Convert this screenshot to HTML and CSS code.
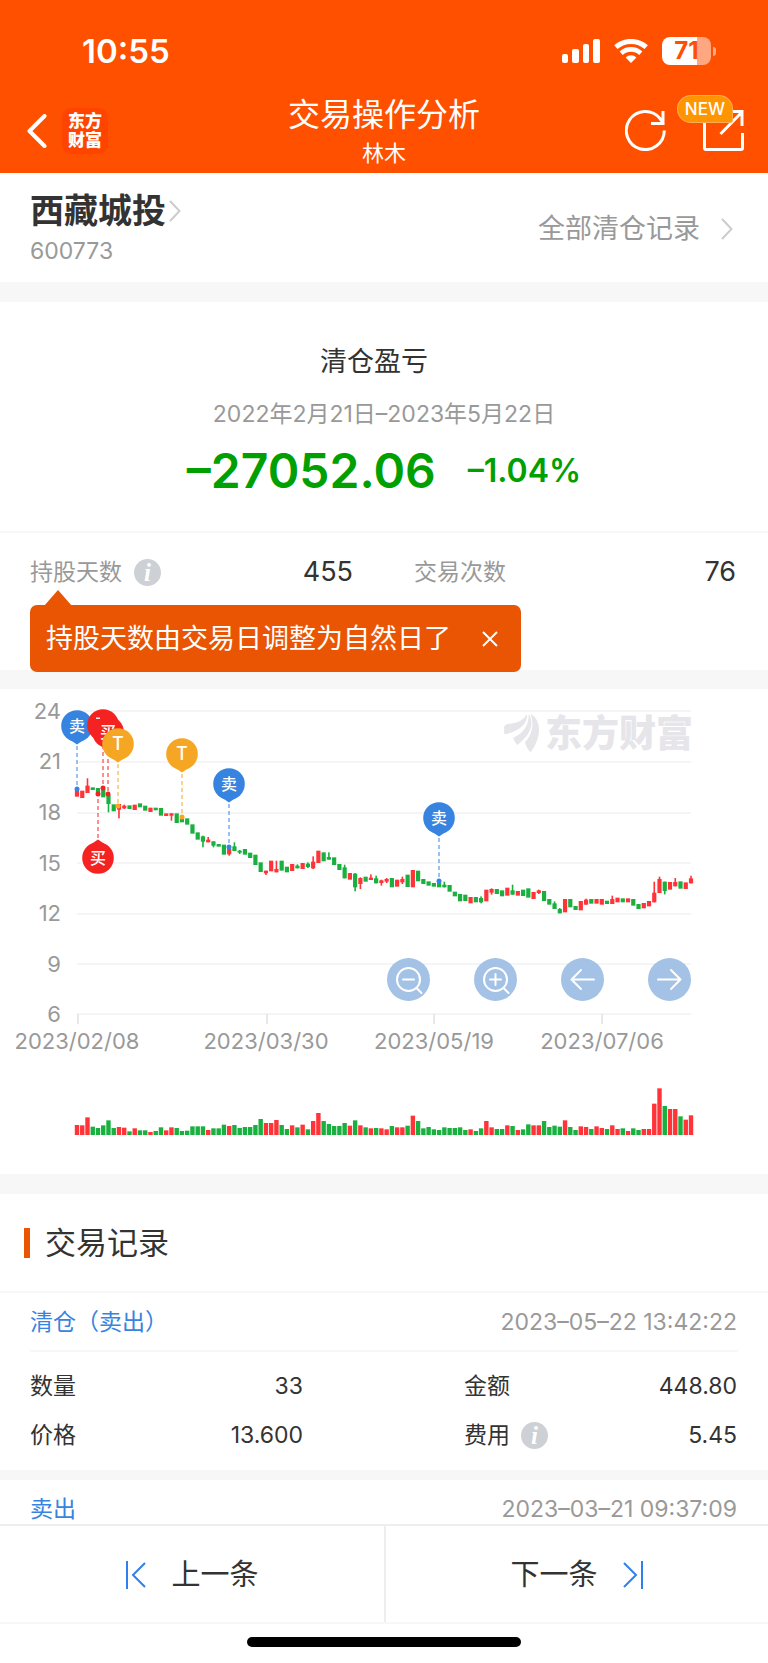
FILE: index.html
```html
<!DOCTYPE html>
<html lang="zh-CN">
<head>
<meta charset="utf-8">
<meta name="viewport" content="width=device-width, initial-scale=1">
<title>交易操作分析</title>
<link rel="stylesheet" href="styles.css">
</head>
<body>
<div class="app">
  <header class="header">
    <div class="status">
      <span class="status-time">10:55</span>
      <div class="status-icons">
        <svg class="signal" viewBox="0 0 38 24" aria-hidden="true"><rect x="0" y="15" width="6" height="9" rx="2"/><rect x="10" y="10" width="7" height="14" rx="2"/><rect x="21" y="5" width="6" height="19" rx="2"/><rect x="31" y="0" width="7" height="24" rx="2"/></svg>
        <svg class="wifi" viewBox="0 0 34 24" aria-hidden="true"><path d="M1.800 8.200a22.800 22.800 0 0 1 30.400 0" stroke-width="5"/><path d="M7.200 14.200a14.600 14.600 0 0 1 19.600 0" stroke-width="4.600"/><path class="wifi-dot" d="M17 24l-5.400-5.600a8 8 0 0 1 10.800 0z"/></svg>
        <div class="battery"><span class="battery-body">71</span><span class="battery-cap"></span></div>
      </div>
    </div>
    <div class="nav">
      <div class="nav-side">
        <button class="icon-btn" aria-label="返回"><svg class="back" viewBox="0 0 20 34"><path d="M17.500 2L2.500 17l15 15"/></svg></button>
        <div class="logo"><span>东方</span><span>财富</span></div>
      </div>
      <div class="nav-title"><h1>交易操作分析</h1><p>林木</p></div>
      <div class="nav-side nav-actions">
        <button class="icon-btn" aria-label="刷新"><svg class="act" viewBox="0 0 41 41"><path d="M39.300 20.500a19 19 0 1 1-4.300-12l3 4"/><path d="M38 1v12.500H26"/></svg></button>
        <button class="icon-btn share" aria-label="分享"><svg class="act" viewBox="0 0 41 41"><path d="M1.500 10v28q0 1.500 1.500 1.500h35q1.500 0 1.500-1.500V23"/><path d="M26 1.500h13V16M39 2L17.500 24"/></svg><span class="badge">NEW</span></button>
      </div>
    </div>
  </header>

  <main class="content">
    <section class="stock">
      <div>
        <a class="stock-name" href="#">西藏城投<svg class="chev" viewBox="0 0 12 22"><path d="M1 1l9.500 10L1 21"/></svg></a>
        <p class="stock-code">600773</p>
      </div>
      <a class="all-records" href="#">全部清仓记录<svg class="chev" viewBox="0 0 12 22"><path d="M1 1l9.500 10L1 21"/></svg></a>
    </section>

    <section class="profit">
      <div class="profit-main">
        <h2>清仓盈亏</h2>
        <p class="profit-date">2022年2月21日–2023年5月22日</p>
        <p class="profit-value"><strong>–27052.06</strong><span>–1.04%</span></p>
      </div>
      <dl class="stats">
        <div class="stat"><dt>持股天数<button class="info" aria-label="持股天数说明">i</button></dt><dd>455</dd></div>
        <div class="stat"><dt>交易次数</dt><dd>76</dd></div>
      </dl>
      <div class="tip" role="status"><span>持股天数由交易日调整为自然日了</span><button class="icon-btn" aria-label="关闭"><svg class="close" viewBox="0 0 16 16"><path d="M1 1l14 14M15 1L1 15"/></svg></button></div>
    </section>

    <section class="chart">
      <svg class="plot" viewBox="0 0 768 485" role="img" aria-label="股价走势与买卖点">
        <g class="grid">
          <path d="M77 22H691M77 73H691M77 124H691M77 174H691M77 225H691M77 275H691M77 325H691"/>
          <path class="ticks" d="M78 325v10M267 325v10M434 325v10M602 325v10"/>
        </g>
        <g class="watermark">
          <g transform="translate(500 0) scale(.3333)">
            <path d="M12 115Q14 104 30 104C55 103 70 92 81 76C84 105 55 128 13 136Z"/>
            <path d="M40 146C72 132 87 108 86 75C106 108 88 140 52 168Q43 158 40 146Z"/>
            <path d="M75 160C97 135 103 108 92 75C125 92 126 145 92 190Q79 178 75 160Z"/>
          </g>
          <text x="545" y="58">东方财富</text>
        </g>
        <g class="labels labels-y">
          <text x="61" y="30">24</text><text x="61" y="80">21</text><text x="61" y="131">18</text><text x="61" y="182">15</text><text x="61" y="232">12</text><text x="61" y="283">9</text><text x="61" y="333">6</text>
        </g>
        <g class="labels labels-x">
          <text x="77" y="360">2023/02/08</text><text x="266" y="360">2023/03/30</text><text x="434" y="360">2023/05/19</text><text x="602" y="360">2023/07/06</text>
        </g>
        <g id="candles"></g>
        <g id="volumes"></g>
        <g id="pins"></g>
      </svg>
      <div class="tools">
        <button class="tool" aria-label="缩小"><svg viewBox="0 0 43 43"><circle cx="21.500" cy="21.500" r="11.500"/><path d="M16 21.500h11M29.500 30l5 5"/></svg></button>
        <button class="tool" aria-label="放大"><svg viewBox="0 0 43 43"><circle cx="21.500" cy="21.500" r="11.500"/><path d="M16 21.500h11M21.500 16v11M29.500 30l5 5"/></svg></button>
        <button class="tool" aria-label="左移"><svg viewBox="0 0 43 43"><path d="M33 21.500H10.500M20 12l-9.500 9.500L20 31"/></svg></button>
        <button class="tool" aria-label="右移"><svg viewBox="0 0 43 43"><path d="M10 21.500h22.500M23 12l9.500 9.500L23 31"/></svg></button>
      </div>
    </section>

    <section class="records">
      <h2 class="records-title">交易记录</h2>
      <article class="record">
        <div class="record-head"><h3>清仓（卖出）</h3><time>2023–05–22 13:42:22</time></div>
        <dl class="record-grid">
          <div><dt>数量</dt><dd>33</dd></div>
          <div><dt>金额</dt><dd>448.80</dd></div>
          <div><dt>价格</dt><dd>13.600</dd></div>
          <div><dt>费用<button class="info" aria-label="费用说明">i</button></dt><dd>5.45</dd></div>
        </dl>
      </article>
      <article class="record">
        <div class="record-head"><h3>卖出</h3><time>2023–03–21 09:37:09</time></div>
      </article>
    </section>
  </main>

  <footer class="footer">
    <div class="pager">
      <button><svg viewBox="0 0 22 28"><path d="M2 0v28M20 2L8 14l12 12"/></svg>上一条</button>
      <button>下一条<svg viewBox="0 0 22 28"><path d="M20 0v28M2 2l12 12L2 26"/></svg></button>
    </div>
    <div class="home"><span></span></div>
  </footer>
</div>
<script src="chart.js"></script>
</body>
</html>
```
FILE: styles.css
```css
* { box-sizing: border-box; }
body, h1, h2, h3, p, dl, dd { margin: 0; font-weight: 400; }
body {
  background: #fff;
  color: #333;
  font-family: Inter, "Noto Sans CJK SC", sans-serif;
  font-size: 23px;
  line-height: 32px;
}
a { color: inherit; text-decoration: none; }
button { font: inherit; color: inherit; background: none; border: 0; padding: 0; }
svg { display: block; flex: none; }
path, circle { fill: none; }

.app { display: flex; flex-direction: column; height: 100vh; }

.header { flex: none; background: #ff5000; color: #fff; height: 173px; }
.status { display: flex; justify-content: space-between; align-items: center; height: 84px; padding: 18px 52px 0 82px; }
.status-time { font-size: 33px; font-weight: 600; line-height: 40px; }
.status-icons { display: flex; align-items: center; gap: 14px; }
.signal { width: 38px; height: 24px; fill: #fff; }
.wifi { width: 34px; height: 24px; stroke: #fff; }
.wifi .wifi-dot { fill: #fff; stroke: none; }
.battery { display: flex; align-items: center; gap: 2px; }
.battery-body { width: 49px; height: 28px; border-radius: 8px; background: linear-gradient(90deg, #fff 71%, #ffa780 71%); color: #ff5000; font-size: 24px; font-weight: 700; line-height: 28px; text-align: center; }
.battery-cap { width: 3px; height: 9px; border-radius: 0 4px 4px 0; background: #ffa780; }

.nav { display: grid; grid-template-columns: 1fr auto 1fr; align-items: center; height: 89px; padding: 4px 24px 0 27px; }
.nav-side { display: flex; align-items: center; gap: 15px; }
.nav-actions { justify-content: flex-end; gap: 37px; }
.icon-btn { display: block; position: relative; }
.back { width: 20px; height: 34px; stroke: #fff; stroke-width: 4; }
.back path { stroke-linecap: round; stroke-linejoin: round; }
.logo { display: grid; align-content: center; justify-items: center; width: 46px; height: 46px; border-radius: 9px; background: #ff4400; font-size: 17px; line-height: 19px; font-weight: 900; }
.nav-title { padding-right: 3px; text-align: center; }
.nav-title h1 { font-size: 32px; line-height: 44px; }
.nav-title p { font-size: 22px; line-height: 32px; }
.act { width: 41px; height: 41px; stroke: #fff; stroke-width: 3; }
.badge { position: absolute; right: 12px; top: -14px; height: 26px; padding: 0 7px; border-radius: 13px 13px 2px 13px; background: #ff9500; box-shadow: 0 0 0 1px #ffab50; font-size: 17px; font-weight: 500; line-height: 26px; }

.content { flex: 1; min-height: 0; overflow: hidden; }
.stock { display: flex; justify-content: space-between; align-items: center; height: 109px; padding: 2px 35px 0 30px; }
.stock-name { display: flex; align-items: center; gap: 3px; font-size: 34px; font-weight: 700; line-height: 44px; }
.stock-code { font-size: 23px; line-height: 36px; color: #999; }
.all-records { display: flex; align-items: center; gap: 21px; font-size: 27px; color: #999; }
.chev { width: 12px; height: 22px; stroke: #ccc; stroke-width: 2; }

.profit { position: relative; border-top: 20px solid #f7f7f7; border-bottom: 19px solid #f7f7f7; }
.profit-main { padding: 40px 0 31px; text-align: center; border-bottom: 2px solid #f7f7f7; }
.profit-main h2 { padding-right: 20px; font-size: 27px; line-height: 40px; }
.profit-date { margin-top: 16px; color: #999; }
.profit-value { display: flex; justify-content: center; align-items: center; gap: 32px; margin-top: 12px; color: #00a000; font-size: 32px; line-height: 58px; }
.profit-value span { font-weight: 600; }
.profit-value strong { font-size: 48px; font-weight: 600; }
.stats { display: grid; grid-template-columns: 353px 1fr; height: 137px; padding: 23px 32px 0 30px; }
.stat { display: flex; justify-content: space-between; height: 32px; padding-right: 30px; }
.stat + .stat { padding: 0 0 0 31px; }
.stat dt { display: flex; align-items: center; gap: 12px; color: #999; }
.stat dd { font-size: 27px; }
.info { width: 27px; height: 27px; border-radius: 50%; background: #cdd0d5; color: #fff; font-family: "Liberation Serif", serif; font-size: 25px; font-style: italic; font-weight: 700; line-height: 27px; text-align: center; }
.tip { position: absolute; left: 30px; bottom: -2px; display: flex; align-items: center; gap: 31px; height: 67px; padding: 0 23px 0 16px; border-radius: 7px; background: #ea5504; color: #fff; font-size: 27px; }
.tip::before { content: ""; position: absolute; left: 14px; top: -15px; border: 14px solid transparent; border-top: 0; border-bottom: 16px solid #ea5504; }
.close { width: 16px; height: 16px; stroke: #fff; stroke-width: 2; }

.chart { position: relative; border-bottom: 20px solid #f7f7f7; }
.plot { width: 100%; height: auto; }
.grid path { stroke: #f5f5f5; stroke-width: 2; }
.grid .ticks { stroke: #e8e8e8; }
.watermark path { fill: #e5e5ea; }
.watermark text { fill: #e5e5ea; font-size: 37px; font-weight: 900; }
.labels text { fill: #999; font-size: 22px; }
.labels-y text { text-anchor: end; }
.labels-x text { text-anchor: middle; }
.up { fill: #ff3338; }
.down { fill: #19b03f; }
.pin text { fill: #fff; font-size: 16px; font-weight: 500; text-anchor: middle; }
.pin line { stroke-width: 1; stroke-dasharray: 4 3; }
.pin-sell path, .pin-sell circle { fill: #3783e0; }
.pin-sell line { stroke: #3783e0; }
.pin-buy path, .pin-buy circle { fill: #f52222; }
.pin-buy line { stroke: #f52222; }
.pin-t path, .pin-t circle { fill: #f5a623; }
.pin-t line { stroke: #f5a623; }
.pin-t text { font-size: 18px; }
.tools { position: absolute; right: 10%; top: 269px; display: flex; gap: 44px; }
.tool { width: 43px; height: 43px; border-radius: 50%; background: #a4c2e5; }
.tool svg { width: 43px; height: 43px; stroke: #fff; stroke-width: 2; stroke-linecap: round; stroke-linejoin: round; }

.records-title { display: flex; align-items: center; gap: 15px; height: 99px; padding-left: 24px; border-bottom: 2px solid #f7f7f7; font-size: 31px; line-height: 44px; }
.records-title::before { content: ""; width: 6px; height: 30px; background: #ea5504; }
.record { padding: 0 30px; border-bottom: 10px solid #f7f7f7; }
.record-head { display: flex; justify-content: space-between; align-items: center; height: 59px; padding-right: 1px; border-bottom: 2px solid #f7f7f7; }
.record-head h3 { font-size: 23px; color: #3783e0; }
.record-head time { color: #999; }
.record-grid { display: grid; grid-template-columns: 273px 273px; justify-content: space-between; row-gap: 17px; padding: 18px 1px 19px 0; }
.record-grid div { display: flex; justify-content: space-between; }
.record-grid dt { display: flex; align-items: center; gap: 11px; }

.footer { flex: none; background: #fff; border-top: 2px solid #eee; }
.pager { display: grid; grid-template-columns: 1fr 1fr; height: 98px; border-bottom: 2px solid #f7f7f7; }
.pager button { display: flex; align-items: center; justify-content: center; gap: 24px; padding-top: 2px; font-size: 29px; }
.pager button + button { border-left: 2px solid #eee; }
.pager svg { width: 22px; height: 28px; stroke: #2f80ed; stroke-width: 2; }
.home { display: flex; justify-content: center; height: 39px; padding-top: 13px; }
.home span { width: 274px; height: 10px; border-radius: 5px; background: #000; }
```
FILE: chart.js
```javascript
const NS = 'http://www.w3.org/2000/svg';
const FIRST_X = 77;
const STEP = 614 / 117;
const VOLUME_BASE = 446;

// Colour, high, low, then body top and bottom where a wick shows (thirds of a unit).
const candles = `r305-323 r305-327 r268-312-290-312 g295-303 g297-312 g300-325 g312-370-318-345 g346-367 r345-388-345-362 r347-360-350-358
g349-360 r347-363 g343-355 g350-365 r356-369 g356-364 g357-380 r373-381 r373-395-373-380 g373-402
g385-400 g388-407 g406-434 g430-452 g440-475-442-458 r444-460-452-460 g457-475-457-470 g465-473 g467-497 r478-500-480-496
g460-486-472-486 g483-495-485-491 g480-497 g491-507 g497-528 g520-549 r545-558-545-553 r515-547 r515-550-540-550 g515-545
g533-550 r525-546 g526-538-530-538 r522-540 g520-537-524-534 r502-540-518-538 r485-522 g490-517 g490-512-504-512 g505-528
g525-543 g527-568-535-568 r552-572 g552-607-554-595 r565-600-567-585 g563-578 r556-573-566-573 g560-583-568-583 r572-590-574-582 r567-582-570-578
g567-595 r572-593 r563-585-570-580 g557-594 r543-595 g545-577 g570-585 g577-590 g582-593 g580-595
g578-595-587-595 g588-608 g608-622 g615-637 g617-636 r624-643 g624-640 g622-643-627-640 r602-637 r598-617-600-611
g600-615 g604-622 r596-620 g587-617-604-617 r606-620 g602-621 g598-626 r609-630 r602-615-604-612 g606-636
g630-647 g637-660-643-660 g657-673-660-673 r630-670 g630-655 g651-663 r636-664 r629-647-632-647 g630-644 r630-644
r630-647 g635-645 r620-645-630-645 r626-640 g628-640 r628-640 g630-650 g645-660 r642-658 r636-652
r578-640-611-640 r563-612-570-612 g578-616-578-606 r579-602 r567-592-579-592 g577-599 r580-600 r560-583-568-583`;

const volumes = `r30 r29 r53 g25 g21 g29 g44 g21 r24 r22 g11 r20 g14 g14 r9 g12 g23 r14 r23 g21 g12 g13 g26 g26 g26 r15 g20 g20 g31 r27
g30 g21 g24 g24 g30 g48 r36 r36 r45 g30 g18 r29 g23 r31 g17 r42 r66 g42 g33 g27 g27 g36 r28 g44 r29 g23 r20 g21 r20 r17
g27 r23 r23 g28 r58 g42 g20 g24 g17 g15 g23 g21 g21 g23 g15 r17 g12 g20 r42 r23 g18 g18 r29 g27 r15 g17 g32 r29 r29 g42
g24 g28 g25 r44 g24 g15 r26 r24 g18 r26 r21 g18 r29 r18 g20 r12 g20 g15 r18 r18 r94 r140 g87 r78 r78 g56 r46 r59`;

const pins = [
  { type: 'sell', label: '卖', x: 77, y: 37, dot: 100 },
  { type: 'buy', label: '', x: 103, y: 36, dot: 99 },
  { type: 'buy', label: '买', x: 108, y: 43, dot: 105 },
  { type: 't', label: 'T', x: 118, y: 55, dot: 117 },
  { type: 't', label: 'T', x: 182, y: 65, dot: 128 },
  { type: 'sell', label: '卖', x: 229, y: 95, dot: 158 },
  { type: 'sell', label: '卖', x: 439, y: 129, dot: 192 },
  { type: 'buy', label: '买', x: 98, y: 169, dot: 105 }
];

function add(parent, tag, attrs, text) {
  const el = document.createElementNS(NS, tag);
  for (const key in attrs) el.setAttribute(key, attrs[key]);
  if (text) el.textContent = text;
  parent.appendChild(el);
  return el;
}
function bar(parent, tone, x, top, bottom, width) {
  add(parent, 'rect', { class: tone, x: x - width / 2, y: top, width: width, height: bottom - top });
}
const toneOf = item => item[0] === 'r' ? 'up' : 'down';

const candleLayer = document.getElementById('candles');
candles.split(/\s+/).forEach((item, i) => {
  const [high, low, top, bottom] = item.slice(1).split('-').map(v => v / 3);
  const x = FIRST_X + i * STEP;
  bar(candleLayer, toneOf(item), x, high, low, top ? 1.6 : 4.2);
  if (top) bar(candleLayer, toneOf(item), x, top, bottom, 4.2);
});

const volumeLayer = document.getElementById('volumes');
volumes.split(/\s+/).forEach((item, i) => {
  bar(volumeLayer, toneOf(item), FIRST_X + i * STEP, VOLUME_BASE - item.slice(1) / 3, VOLUME_BASE, 4.4);
});

const pinLayer = document.getElementById('pins');
pins.forEach(({ type, label, x, y, dot }) => {
  const g = add(pinLayer, 'g', { class: 'pin pin-' + type });
  const dir = dot > y ? 1 : -1;
  add(g, 'line', { x1: x, y1: y + dir * 20, x2: x, y2: dot });
  add(g, 'circle', { cx: x, cy: dot, r: 2.5 });
  add(g, 'circle', { cx: x, cy: y, r: 15.8 });
  add(g, 'path', { d: `M${x - 11} ${y + dir * 11}L${x} ${y + dir * 18.5}L${x + 11} ${y + dir * 11}Z` });
  if (label) add(g, 'text', { x: x, y: y + 6 }, label);
});
add(pinLayer, 'rect', { x: 96, y: 28.5, width: 4, height: 1.4, fill: '#fff' });
```
